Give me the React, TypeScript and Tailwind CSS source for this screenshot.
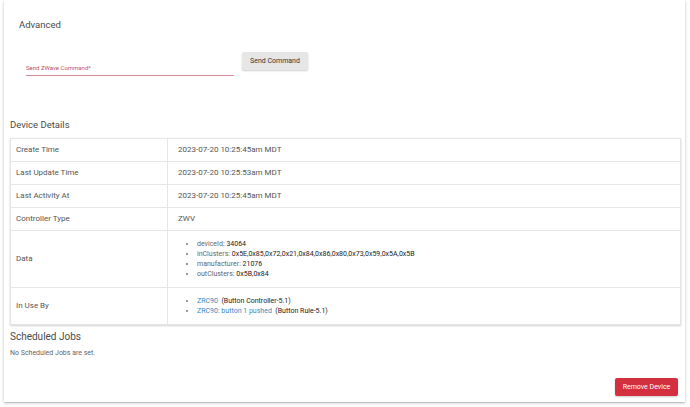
const details: { label: string; value: string }[] = [
  { label: 'Create Time', value: '2023-07-20 10:25:45am MDT' },
  { label: 'Last Update Time', value: '2023-07-20 10:25:53am MDT' },
  { label: 'Last Activity At', value: '2023-07-20 10:25:45am MDT' },
  { label: 'Controller Type', value: 'ZWV' },
];

const data: [string, string][] = [
  ['deviceId', '34064'],
  ['inClusters', '0x5E,0x85,0x72,0x21,0x84,0x86,0x80,0x73,0x59,0x5A,0x5B'],
  ['manufacturer', '21076'],
  ['outClusters', '0x5B,0x84'],
];

const inUse: [string, string][] = [
  ['ZRC90', 'Button Controller-5.1'],
  ['ZRC90: button 1 pushed', 'Button Rule-5.1'],
];

function Row({ label, children, tall }: { label: string; children: React.ReactNode; tall?: boolean }) {
  return (
    <div className="grid grid-cols-[157px_1fr] border-b border-[#e6e6e6] last:border-b-0">
      <div
        className={`flex items-center border-r border-[#e6e6e6] pl-[5px] text-[8px] text-[#555] ${tall ? '' : 'h-[22px]'}`}
      >
        {label}
      </div>
      <div className={`flex items-center pl-[10px] text-[8px] text-[#555] ${tall ? 'py-2' : 'h-[22px]'}`}>
        {children}
      </div>
    </div>
  );
}

export default function App() {
  return (
    <div className="h-[407px] w-[690px] bg-white pl-[4px] font-['Roboto',sans-serif]">
      <div className="flex h-[402px] w-[681px] flex-col bg-white shadow-[0_1px_3px_rgba(0,0,0,0.22),0_1px_1px_rgba(0,0,0,0.12)]">
        <section className="pl-[15px] pt-[19px]">
          <h2 className="text-[9.5px] leading-[12px] text-[#4a4a4a]">Advanced</h2>
          <div className="mt-[21px] flex items-start">
            <div className="ml-[7px] w-[208px] pt-[12px]">
              <div className="text-[6px] leading-[8px] text-[#c4506a]">Send ZWave Command*</div>
              <div className="mt-[3px] border-b border-[#d48b98]" />
            </div>
            <button
              type="button"
              className="ml-[8px] h-[18px] w-[66px] rounded-[2px] bg-[#e6e6e6] text-[7px] text-[#333] shadow-[0_1px_2px_rgba(0,0,0,0.2)]"
            >
              Send Command
            </button>
          </div>
        </section>

        <h2 className="mt-[43px] pl-[6px] text-[9.5px] leading-[12px] text-[#4a4a4a]">Device Details</h2>

        <div className="ml-[6px] mt-[7px] w-[671px] border border-[#e4e4e4] shadow-[0_1px_2px_rgba(0,0,0,0.18)]">
          {details.map((d) => (
            <Row key={d.label} label={d.label}>
              {d.value}
            </Row>
          ))}
          <Row label="Data" tall>
            <ul className="list-disc pl-[19px] text-[7px] leading-[10px] marker:text-[#777]">
              {data.map(([k, v]) => (
                <li key={k}>
                  <span className="text-[#666]">{k}: </span>
                  <span className="text-[#222]">{v}</span>
                </li>
              ))}
            </ul>
          </Row>
          <Row label="In Use By" tall>
            <ul className="list-disc pl-[19px] text-[7px] leading-[10px] marker:text-[#777]">
              {inUse.map(([name, app]) => (
                <li key={name}>
                  <a className="text-[#3d88bb]">{name}</a>
                  <span className="whitespace-pre text-[#222]">{'  '}({app})</span>
                </li>
              ))}
            </ul>
          </Row>
        </div>

        <h2 className="mt-[6px] pl-[6px] text-[10px] leading-[12px] text-[#4a4a4a]">Scheduled Jobs</h2>
        <p className="mt-[6px] pl-[6px] text-[7px] leading-[9px] text-[#666]">No Scheduled Jobs are set.</p>

        <button
          type="button"
          className="mb-[6px] mr-[7px] mt-auto h-[18px] w-[63px] self-end rounded-[2px] bg-[#d32f3f] text-[7px] text-white shadow-[0_1px_2px_rgba(0,0,0,0.2)]"
        >
          Remove Device
        </button>
      </div>
    </div>
  );
}
